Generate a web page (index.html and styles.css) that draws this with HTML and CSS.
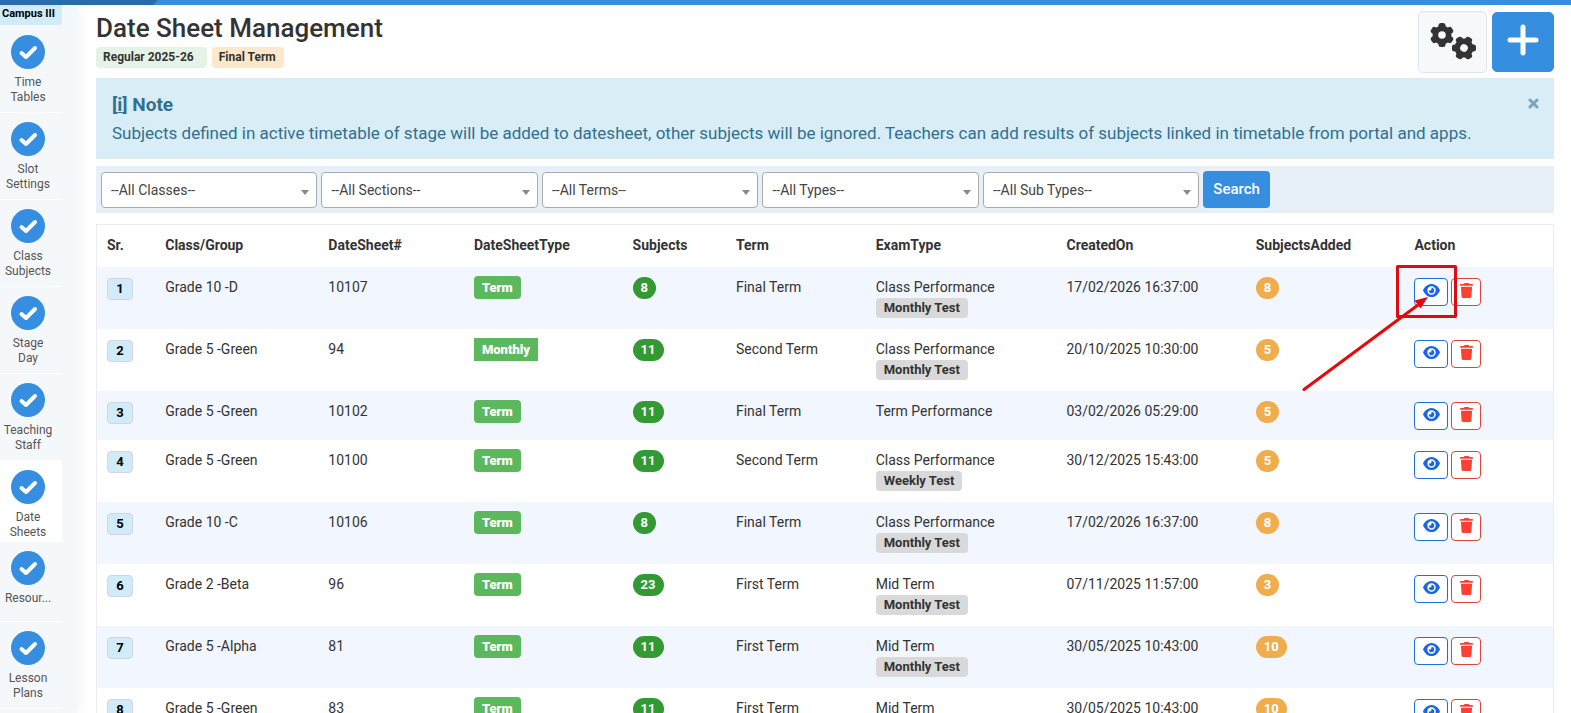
FILE: index.html
```html
<!DOCTYPE html>
<html lang="en">
<head>
    <meta charset="UTF-8">
    <meta name="viewport" content="width=device-width, initial-scale=1.0">
    <title>Date Sheet Management</title>
    <link rel="stylesheet" href="styles.css">
</head>
<body>

    <!-- Shared icons -->
    <svg class="icon-defs" aria-hidden="true">
        <symbol id="icon-check" viewBox="0 0 34 34">
            <path d="M10.5 18l4.5 4 9-9" fill="none" stroke="#fff" stroke-width="4" stroke-linecap="round" stroke-linejoin="round"/>
        </symbol>
        <symbol id="icon-eye" viewBox="0 0 576 512">
            <path fill="currentColor" d="M288 32c-80.800 0-145.500 36.800-192.600 80.600C48.600 156 17.300 208 2.500 243.700c-3.300 7.900-3.300 16.700 0 24.600C17.300 304 48.600 356 95.400 399.400C142.500 443.200 207.200 480 288 480s145.500-36.800 192.600-80.600c46.800-43.500 78.100-95.400 93-131.100c3.300-7.900 3.300-16.700 0-24.600c-14.900-35.700-46.200-87.700-93-131.100C433.500 68.800 368.800 32 288 32zM144 256a144 144 0 1 1 288 0 144 144 0 1 1-288 0zm144-64c0 35.300-28.700 64-64 64c-7.100 0-13.900-1.200-20.300-3.300c-5.500-1.800-11.900 1.600-11.700 7.400c.3 6.900 1.300 13.800 3.200 20.700c13.700 51.200 66.400 81.600 117.600 67.900s81.600-66.400 67.900-117.600c-11.100-41.500-47.800-69.400-88.600-71.100c-5.800-.2-9.200 6.100-7.400 11.700c2.100 6.400 3.300 13.200 3.300 20.300z"/>
        </symbol>
        <symbol id="icon-trash" viewBox="0 0 448 512">
            <path fill="currentColor" d="M135.200 17.700L128 32H32C14.300 32 0 46.300 0 64s14.300 32 32 32h384c17.700 0 32-14.300 32-32s-14.300-32-32-32h-96l-7.200-14.300C307.400 6.800 296.300 0 284.200 0H163.800c-12.100 0-23.200 6.800-28.600 17.700zM416 128H32l21.200 339c1.600 25.300 22.600 45 47.900 45h245.800c25.300 0 46.300-19.700 47.900-45L416 128z"/>
        </symbol>
        <symbol id="icon-gear" viewBox="0 0 24 24">
            <g fill="currentColor">
                <rect x="8.500" y="0" width="7" height="24" rx="2.500"/>
                <rect x="8.500" y="0" width="7" height="24" rx="2.500" transform="rotate(60 12 12)"/>
                <rect x="8.500" y="0" width="7" height="24" rx="2.500" transform="rotate(120 12 12)"/>
                <circle cx="12" cy="12" r="9.500"/>
            </g>
            <circle class="gear-hole" cx="12" cy="12" r="3.800"/>
        </symbol>
    </svg>

    <div class="top-bar"></div>

    <div class="layout">
        <nav class="sidebar">
            <div class="campus">Campus III</div>
            <a class="nav-item" href="#"><svg class="nav-icon"><use href="#icon-check"/></svg><span>Time<br>Tables</span></a>
            <a class="nav-item" href="#"><svg class="nav-icon"><use href="#icon-check"/></svg><span>Slot<br>Settings</span></a>
            <a class="nav-item" href="#"><svg class="nav-icon"><use href="#icon-check"/></svg><span>Class<br>Subjects</span></a>
            <a class="nav-item" href="#"><svg class="nav-icon"><use href="#icon-check"/></svg><span>Stage<br>Day</span></a>
            <a class="nav-item" href="#"><svg class="nav-icon"><use href="#icon-check"/></svg><span>Teaching<br>Staff</span></a>
            <a class="nav-item active" href="#"><svg class="nav-icon"><use href="#icon-check"/></svg><span>Date<br>Sheets</span></a>
            <a class="nav-item single" href="#"><svg class="nav-icon"><use href="#icon-check"/></svg><span>Resour...</span></a>
            <a class="nav-item" href="#"><svg class="nav-icon"><use href="#icon-check"/></svg><span>Lesson<br>Plans</span></a>
        </nav>

        <main class="content">
            <header class="page-header">
                <div>
                    <h1>Date Sheet Management</h1>
                    <div class="tags">
                        <span class="tag tag-session">Regular 2025-26</span>
                        <span class="tag tag-term">Final Term</span>
                    </div>
                </div>
                <div class="header-actions">
                    <button class="btn-settings" type="button" aria-label="Settings">
                        <svg class="gear"><use href="#icon-gear"/></svg>
                        <svg class="gear gear-low"><use href="#icon-gear"/></svg>
                    </button>
                    <button class="btn-add" type="button" aria-label="Add date sheet">
                        <svg width="32" height="32" viewBox="0 0 32 32"><path d="M16 3v26M3 16h26" stroke="#fff" stroke-width="5" stroke-linecap="round"/></svg>
                    </button>
                </div>
            </header>

            <div class="note">
                <div>
                    <h2>[<u>i</u>] Note</h2>
                    <p>Subjects defined in active timetable of stage will be added to datesheet, other subjects will be ignored. Teachers can add results of subjects linked in timetable from portal and apps.</p>
                </div>
                <button class="note-close" type="button" aria-label="Close">
                    <svg width="11" height="11" viewBox="0 0 11 11"><path d="M2 2l7 7M9 2l-7 7" stroke="currentColor" stroke-width="3" stroke-linecap="round"/></svg>
                </button>
            </div>

            <form class="filters">
                <select aria-label="Classes"><option>--All Classes--</option></select>
                <select aria-label="Sections"><option>--All Sections--</option></select>
                <select aria-label="Terms"><option>--All Terms--</option></select>
                <select aria-label="Types"><option>--All Types--</option></select>
                <select aria-label="Sub types"><option>--All Sub Types--</option></select>
                <button class="btn-search" type="button">Search</button>
            </form>

            <table class="sheets">
                <colgroup>
                    <col class="c-sr"><col class="c-class"><col class="c-sheet"><col class="c-type"><col class="c-subjects">
                    <col class="c-term"><col class="c-exam"><col class="c-created"><col class="c-added"><col>
                </colgroup>
                <thead>
                    <tr>
                        <th>Sr.</th>
                        <th>Class/Group</th>
                        <th>DateSheet#</th>
                        <th>DateSheetType</th>
                        <th>Subjects</th>
                        <th>Term</th>
                        <th>ExamType</th>
                        <th>CreatedOn</th>
                        <th>SubjectsAdded</th>
                        <th>Action</th>
                    </tr>
                </thead>
                <tbody>
                    <tr>
                        <td><span class="sr">1</span></td>
                        <td>Grade 10 -D</td>
                        <td>10107</td>
                        <td><span class="type">Term</span></td>
                        <td><span class="pill">8</span></td>
                        <td>Final Term</td>
                        <td>Class Performance<span class="test">Monthly Test</span></td>
                        <td>17/02/2026 16:37:00</td>
                        <td><span class="pill added">8</span></td>
                        <td>
                            <div class="actions">
                                <button class="btn-view" type="button" aria-label="View"><svg><use href="#icon-eye"/></svg></button>
                                <button class="btn-delete" type="button" aria-label="Delete"><svg><use href="#icon-trash"/></svg></button>
                                <!-- Pointer to the view button -->
                                <svg class="callout" viewBox="0 0 160 132">
                                    <rect x="97.500" y="4.500" width="58" height="50" fill="none" stroke="#dd0c10" stroke-width="3" stroke-linejoin="round"/>
                                    <path d="M4 127.500L118 43" stroke="#e8080c" stroke-width="3" stroke-linecap="round"/>
                                    <path d="M128 35L120.500 46.500L114.500 38.500z" fill="#e8080c"/>
                                </svg>
                            </div>
                        </td>
                    </tr>
                    <tr>
                        <td><span class="sr">2</span></td>
                        <td>Grade 5 -Green</td>
                        <td>94</td>
                        <td><span class="type monthly">Monthly</span></td>
                        <td><span class="pill">11</span></td>
                        <td>Second Term</td>
                        <td>Class Performance<span class="test">Monthly Test</span></td>
                        <td>20/10/2025 10:30:00</td>
                        <td><span class="pill added">5</span></td>
                        <td>
                            <div class="actions">
                                <button class="btn-view" type="button" aria-label="View"><svg><use href="#icon-eye"/></svg></button>
                                <button class="btn-delete" type="button" aria-label="Delete"><svg><use href="#icon-trash"/></svg></button>
                            </div>
                        </td>
                    </tr>
                    <tr>
                        <td><span class="sr">3</span></td>
                        <td>Grade 5 -Green</td>
                        <td>10102</td>
                        <td><span class="type">Term</span></td>
                        <td><span class="pill">11</span></td>
                        <td>Final Term</td>
                        <td>Term Performance</td>
                        <td>03/02/2026 05:29:00</td>
                        <td><span class="pill added">5</span></td>
                        <td>
                            <div class="actions">
                                <button class="btn-view" type="button" aria-label="View"><svg><use href="#icon-eye"/></svg></button>
                                <button class="btn-delete" type="button" aria-label="Delete"><svg><use href="#icon-trash"/></svg></button>
                            </div>
                        </td>
                    </tr>
                    <tr>
                        <td><span class="sr">4</span></td>
                        <td>Grade 5 -Green</td>
                        <td>10100</td>
                        <td><span class="type">Term</span></td>
                        <td><span class="pill">11</span></td>
                        <td>Second Term</td>
                        <td>Class Performance<span class="test">Weekly Test</span></td>
                        <td>30/12/2025 15:43:00</td>
                        <td><span class="pill added">5</span></td>
                        <td>
                            <div class="actions">
                                <button class="btn-view" type="button" aria-label="View"><svg><use href="#icon-eye"/></svg></button>
                                <button class="btn-delete" type="button" aria-label="Delete"><svg><use href="#icon-trash"/></svg></button>
                            </div>
                        </td>
                    </tr>
                    <tr>
                        <td><span class="sr">5</span></td>
                        <td>Grade 10 -C</td>
                        <td>10106</td>
                        <td><span class="type">Term</span></td>
                        <td><span class="pill">8</span></td>
                        <td>Final Term</td>
                        <td>Class Performance<span class="test">Monthly Test</span></td>
                        <td>17/02/2026 16:37:00</td>
                        <td><span class="pill added">8</span></td>
                        <td>
                            <div class="actions">
                                <button class="btn-view" type="button" aria-label="View"><svg><use href="#icon-eye"/></svg></button>
                                <button class="btn-delete" type="button" aria-label="Delete"><svg><use href="#icon-trash"/></svg></button>
                            </div>
                        </td>
                    </tr>
                    <tr>
                        <td><span class="sr">6</span></td>
                        <td>Grade 2 -Beta</td>
                        <td>96</td>
                        <td><span class="type">Term</span></td>
                        <td><span class="pill">23</span></td>
                        <td>First Term</td>
                        <td>Mid Term<span class="test">Monthly Test</span></td>
                        <td>07/11/2025 11:57:00</td>
                        <td><span class="pill added">3</span></td>
                        <td>
                            <div class="actions">
                                <button class="btn-view" type="button" aria-label="View"><svg><use href="#icon-eye"/></svg></button>
                                <button class="btn-delete" type="button" aria-label="Delete"><svg><use href="#icon-trash"/></svg></button>
                            </div>
                        </td>
                    </tr>
                    <tr>
                        <td><span class="sr">7</span></td>
                        <td>Grade 5 -Alpha</td>
                        <td>81</td>
                        <td><span class="type">Term</span></td>
                        <td><span class="pill">11</span></td>
                        <td>First Term</td>
                        <td>Mid Term<span class="test">Monthly Test</span></td>
                        <td>30/05/2025 10:43:00</td>
                        <td><span class="pill added">10</span></td>
                        <td>
                            <div class="actions">
                                <button class="btn-view" type="button" aria-label="View"><svg><use href="#icon-eye"/></svg></button>
                                <button class="btn-delete" type="button" aria-label="Delete"><svg><use href="#icon-trash"/></svg></button>
                            </div>
                        </td>
                    </tr>
                    <tr>
                        <td><span class="sr">8</span></td>
                        <td>Grade 5 -Green</td>
                        <td>83</td>
                        <td><span class="type">Term</span></td>
                        <td><span class="pill">11</span></td>
                        <td>First Term</td>
                        <td>Mid Term</td>
                        <td>30/05/2025 10:43:00</td>
                        <td><span class="pill added">10</span></td>
                        <td>
                            <div class="actions">
                                <button class="btn-view" type="button" aria-label="View"><svg><use href="#icon-eye"/></svg></button>
                                <button class="btn-delete" type="button" aria-label="Delete"><svg><use href="#icon-trash"/></svg></button>
                            </div>
                        </td>
                    </tr>
                </tbody>
            </table>
        </main>
    </div>

</body>
</html>
```
FILE: styles.css
```css
* {
    box-sizing: border-box;
}

body {
    margin: 0;
    height: 100vh;
    display: flex;
    flex-direction: column;
    overflow: hidden;
    font-family: Roboto, Arial, sans-serif;
    font-size: 14px;
    line-height: 20px;
    color: #333;
    background-color: #fff;
}

button, select {
    font-family: inherit;
    cursor: pointer;
}

.icon-defs {
    display: none;
}

/* Top bar */
.top-bar {
    flex: none;
    height: 5px;
    background-color: #368ee0;
}

.top-bar::before {
    content: "";
    display: block;
    width: 158px;
    height: 5px;
    background-color: #2a6cab;
    clip-path: polygon(0 0, 100% 0, 97% 100%, 0 100%);
}

.layout {
    flex: 1;
    min-height: 0;
    display: flex;
}

/* Sidebar */
.sidebar {
    flex: none;
    width: 77px;
    padding-right: 15px;
    overflow: hidden;
    background-color: #f5f8fa;
    box-shadow: 0 0 14px rgba(0, 0, 0, 0.07);
}

.campus {
    height: 20px;
    margin-bottom: 1px;
    padding-left: 2px;
    border-radius: 0 0 3px 0;
    background-color: #d1ecf9;
    color: #000;
    font-size: 11px;
    font-weight: bold;
    line-height: 17px;
}

.nav-item {
    display: flex;
    flex-direction: column;
    align-items: center;
    gap: 6px;
    padding: 9px 6px 7px 0;
    border-bottom: 1px solid #fff;
    color: #555;
    font-size: 12px;
    line-height: 15px;
    text-align: center;
    text-decoration: none;
}

.nav-item.active {
    padding-bottom: 1px;
    background-color: #fff;
}

.nav-item.single {
    padding-bottom: 15px;
}

.nav-icon {
    width: 34px;
    height: 34px;
    border-radius: 50%;
    background-color: #368ee0;
}

/* Main area */
.content {
    flex: 1;
    min-width: 0;
    padding: 6px 17px 0 19px;
    overflow: hidden;
}

.page-header {
    display: flex;
    justify-content: space-between;
    margin-bottom: 5px;
}

h1 {
    margin: 0 0 2px;
    font-size: 26px;
    font-weight: 500;
    line-height: 34px;
}

.tags {
    display: flex;
    gap: 5px;
}

.tag {
    padding: 0 8px 0 7px;
    border-radius: 4px;
    font-size: 12px;
    font-weight: bold;
    line-height: 21px;
}

.tag-session {
    padding-right: 13px;
    background-color: #e5f3e6;
}

.tag-term {
    background-color: #fde8cb;
}

.header-actions {
    display: flex;
    align-items: center;
    gap: 5px;
}

.btn-settings, .btn-add {
    display: flex;
    align-items: center;
    justify-content: center;
    padding: 0 0 4px;
    border: 1px solid #e2e4e6;
    border-radius: 5px;
}

.btn-settings {
    width: 69px;
    height: 62px;
    background-color: #f7f8fa;
    color: #333;
}

.btn-add {
    width: 62px;
    height: 60px;
    background-color: #368ee0;
    border-color: #368ee0;
}

.gear {
    width: 24px;
    height: 24px;
    margin: 0 -1px 11px 0;
    fill: #f7f8fa;
}

.gear-low {
    margin: 15px 0 0 -1px;
    transform: rotate(30deg);
}

/* Note */
.note {
    display: flex;
    justify-content: space-between;
    align-items: flex-start;
    margin-bottom: 7px;
    padding: 15px 15px 15px 16px;
    background-color: #d9edf7;
    color: #31708f;
}

.note h2 {
    margin: 0 0 5px;
    font-size: 19px;
    font-weight: bold;
    line-height: 24px;
}

.note p {
    margin: 0;
    font-size: 17px;
    line-height: 22px;
}

.note-close {
    margin: 5px 0 0;
    padding: 0;
    border: none;
    background: none;
    color: #7aa4bc;
    line-height: 0;
}

/* Filters */
.filters {
    display: flex;
    align-items: center;
    gap: 4px;
    margin-bottom: 11px;
    padding: 5px;
    background-color: #e7eff8;
}

.filters select {
    width: 14.95%;
    height: 36px;
    padding: 0 9px;
    border: 1px solid #aaa;
    border-radius: 4px;
    appearance: none;
    background: #fff url("data:image/svg+xml,%3Csvg xmlns='http://www.w3.org/2000/svg' width='8' height='5'%3E%3Cpath d='M0 0h8L4 5z' fill='%23888'/%3E%3C/svg%3E") no-repeat right 7px top 17px;
    color: #444;
    font-size: 14px;
}

.btn-search {
    height: 37px;
    padding: 0 10px 2px;
    border: none;
    border-radius: 4px;
    background-color: #368ee0;
    color: #fff;
    font-size: 15px;
    font-weight: 500;
}

/* Table */
.sheets {
    width: 100%;
    table-layout: fixed;
    border-collapse: separate;
    border-spacing: 0;
    border: 1px solid #ececec;
}

.c-sr { width: 4%; }
.c-class { width: 11.2%; }
.c-sheet { width: 10%; }
.c-type { width: 10.9%; }
.c-subjects { width: 7.1%; }
.c-term { width: 9.6%; }
.c-exam { width: 13.1%; }
.c-created { width: 13%; }
.c-added { width: 10.9%; }

th, td {
    padding: 10px 0 10px 10px;
    text-align: left;
    vertical-align: top;
}

th {
    padding-bottom: 12px;
    font-weight: bold;
}

tbody tr:nth-child(odd) {
    background-color: #f1f6ff;
}

.sr {
    display: block;
    width: 26px;
    height: 22px;
    margin-top: 1px;
    border: 1px solid #d8d0e6;
    border-radius: 4px;
    background-color: #d1ecf9;
    color: #000;
    font-size: 13px;
    font-weight: bold;
    line-height: 19px;
    text-align: center;
}

.type, .pill {
    display: inline-block;
    padding: 0 8px;
    color: #fff;
    font-size: 13px;
    font-weight: 900;
}

.type {
    margin-top: -1px;
    border-radius: 4px;
    background-color: #5cb85c;
    line-height: 23px;
}

.type.monthly {
    border-radius: 0;
}

.pill {
    border-radius: 11px;
    background-color: #339933;
    font-weight: bold;
    line-height: 22px;
}

.pill.added {
    background-color: #f0ad4e;
}

.test {
    display: block;
    width: fit-content;
    margin: 1px 0;
    padding: 0 8px;
    border-radius: 4px;
    background-color: #d9d9d9;
    font-size: 13px;
    font-weight: bold;
    line-height: 20px;
}

.actions {
    position: relative;
    display: flex;
    gap: 3px;
    margin-top: 1px;
}

.btn-view, .btn-delete {
    display: flex;
    align-items: center;
    justify-content: center;
    width: 34px;
    height: 28px;
    padding: 0 0 3px;
    border: 1px solid #2170d8;
    border-radius: 4px;
    background-color: #fff;
    color: #1a66e8;
}

.btn-view svg {
    width: 17px;
    height: 15px;
}

.btn-delete {
    width: 30px;
    border-color: #e0453c;
    color: #fb4034;
}

.btn-delete svg {
    width: 13px;
    height: 15px;
}

.callout {
    position: absolute;
    top: -16px;
    left: -114px;
    width: 160px;
    height: 132px;
    pointer-events: none;
}
```
